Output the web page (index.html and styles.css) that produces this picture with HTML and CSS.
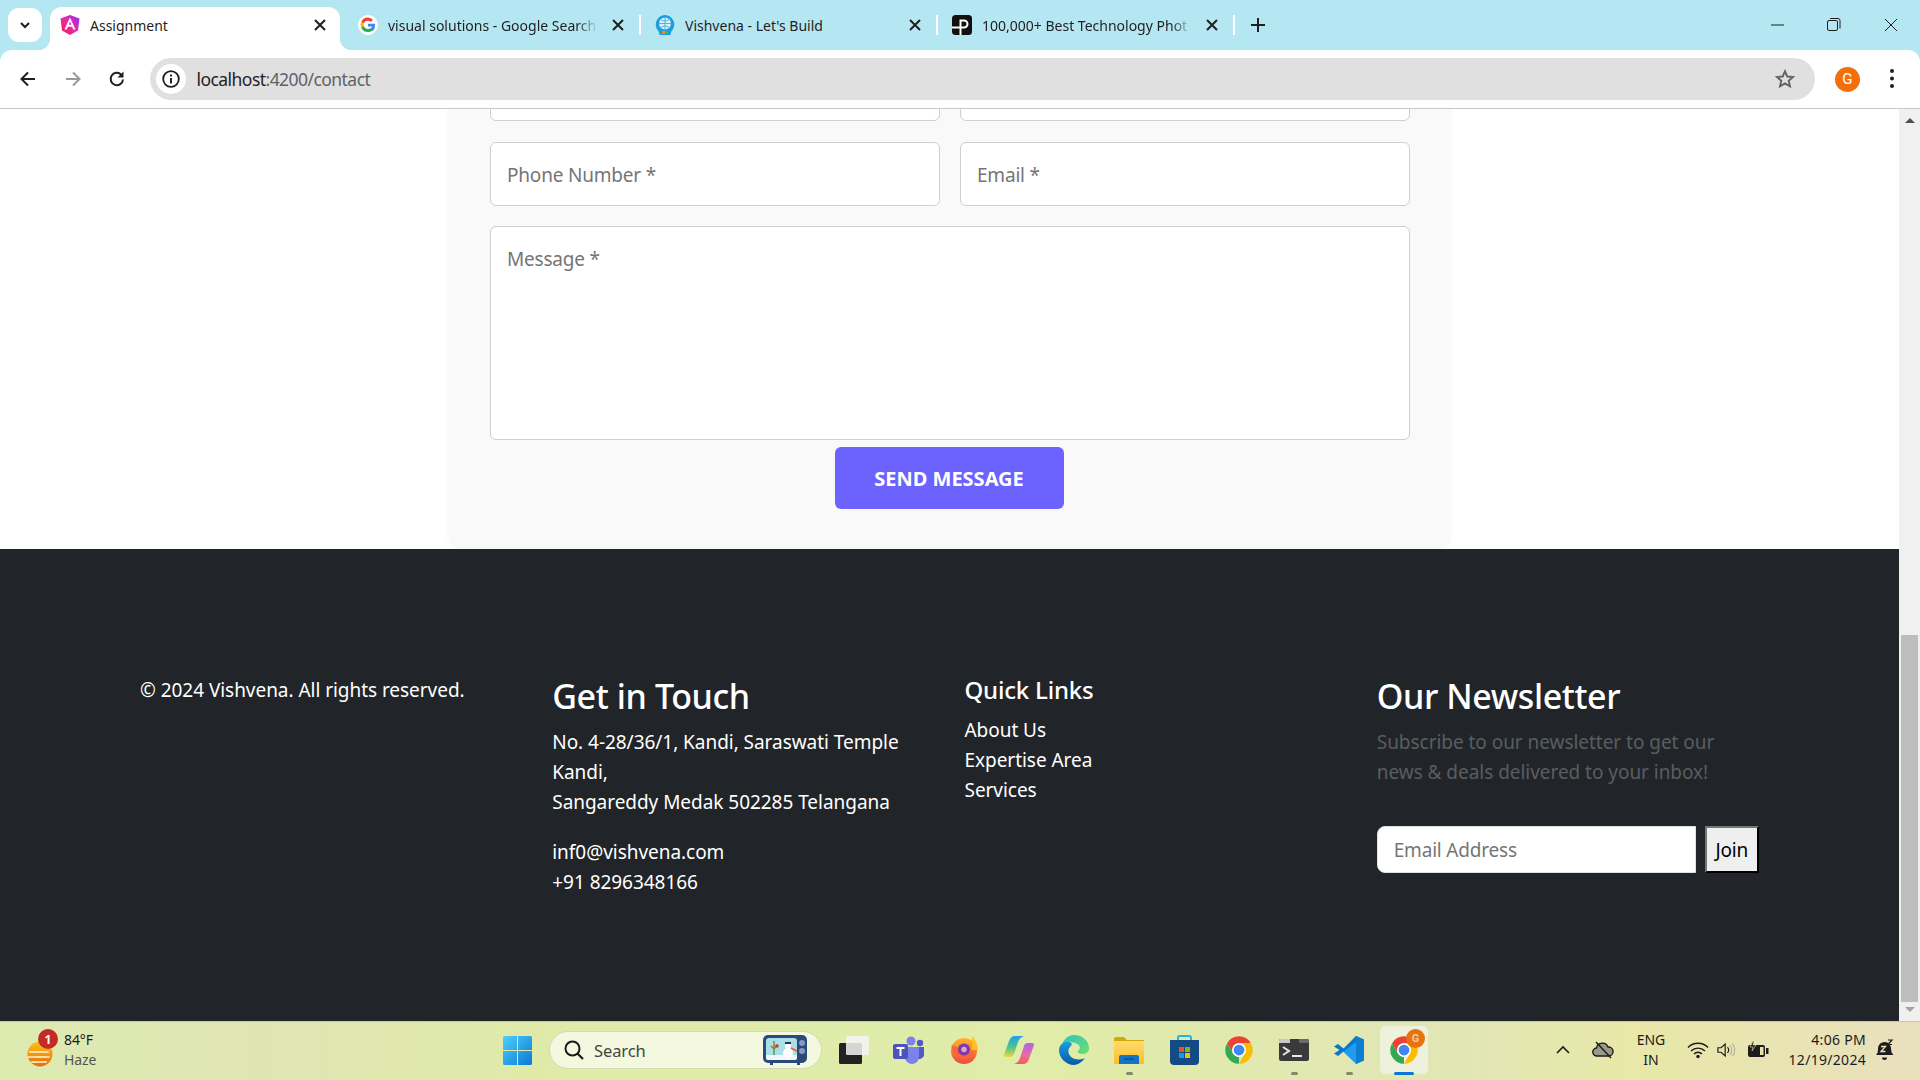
FILE: index.html
```html
<!DOCTYPE html>
<html lang="en">
<head>
  <meta charset="UTF-8" />
  <title>Assignment</title>
  <link rel="stylesheet" href="styles.css">
</head>
<body>

  <svg class="defs" width="0" height="0">
    <symbol id="chrome" viewBox="0 0 48 48">
      <path fill="#ea4335" d="M4.95 13A22 22 0 0 1 43.05 13H24a11 11 0 0 0-9.5 16.5z"/>
      <path fill="#fbbc04" d="M43.05 13A22 22 0 0 1 24 46l9.5-16.5A11 11 0 0 0 24 13z"/>
      <path fill="#34a853" d="M24 46A22 22 0 0 1 4.95 13l9.55 16.5a11 11 0 0 0 9.5 5.5z"/>
      <circle cx="24" cy="24" r="11" fill="#fff"/>
      <circle cx="24" cy="24" r="8.6" fill="#4285f4"/>
    </symbol>
    <symbol id="close" viewBox="0 0 20 20">
      <path d="M5 5l10 10M15 5L5 15" stroke="#1f1f1f" stroke-width="2" fill="none"/>
    </symbol>
    <linearGradient id="ngGrad" x1="0" y1="1" x2="1" y2="0">
      <stop offset="0" stop-color="#f5183f"/><stop offset=".5" stop-color="#e92aa8"/><stop offset="1" stop-color="#8f2cf2"/>
    </linearGradient>
    <linearGradient id="winGrad" x1="0" y1="0" x2="1" y2="1">
      <stop offset="0" stop-color="#4fd0fb"/><stop offset="1" stop-color="#0a78d4"/>
    </linearGradient>
    <linearGradient id="edgeGrad" x1="0" y1="0" x2="1" y2="1">
      <stop offset="0" stop-color="#2fc1c8"/><stop offset="1" stop-color="#6fe06a"/>
    </linearGradient>
    <linearGradient id="edgeBlue" x1="0" y1="0" x2="0" y2="1">
      <stop offset="0" stop-color="#1a9ce0"/><stop offset="1" stop-color="#0b5aa6"/>
    </linearGradient>
    <linearGradient id="copGrad" x1="0" y1="0" x2="0" y2="1">
      <stop offset="0" stop-color="#1f9cee"/><stop offset=".55" stop-color="#4cc98a"/><stop offset="1" stop-color="#f2d43c"/>
    </linearGradient>
    <linearGradient id="copGrad2" x1="0" y1="0" x2="0" y2="1">
      <stop offset="0" stop-color="#a866e8"/><stop offset=".6" stop-color="#ec6aa4"/><stop offset="1" stop-color="#f2604c"/>
    </linearGradient>
    <linearGradient id="folderGrad" x1="0" y1="0" x2="0" y2="1">
      <stop offset="0" stop-color="#ffdc6a"/><stop offset="1" stop-color="#fbbd2c"/>
    </linearGradient>
    <linearGradient id="sunGrad" x1="0" y1="0" x2="0" y2="1">
      <stop offset="0" stop-color="#fcc21a"/><stop offset="1" stop-color="#ec6a08"/>
    </linearGradient>
    <linearGradient id="foxGrad" x1="0" y1="0" x2="0" y2="1">
      <stop offset="0" stop-color="#ffb52e"/><stop offset="1" stop-color="#f0483e"/>
    </linearGradient>
  </svg>

  <div class="tabstrip">
    <button class="tab-menu">
      <svg width="14" height="14" viewBox="0 0 14 14"><path d="M3 5l4 4 4-4" stroke="#1f1f1f" stroke-width="2" fill="none"/></svg>
    </button>

    <div class="tab tab-active">
      <svg class="favicon" viewBox="0 0 20 20">
        <path fill="url(#ngGrad)" d="M10 0l9.500 3.400-1.500 12L10 20l-8-4.600-1.500-12z"/>
        <path fill="#fff" d="M10 2.500L4.500 14.500h2.300l1-2.700h4.400l1 2.700h2.300zM8.700 9.800L10 6.600l1.300 3.200z"/>
      </svg>
      <span class="tab-title">Assignment</span>
      <svg class="tab-x"><use href="#close"/></svg>
    </div>

    <div class="tab tab-second">
      <svg class="favicon" viewBox="0 0 20 20">
        <circle cx="10" cy="10" r="10" fill="#fff"/>
        <path fill="#4285f4" d="M17 10.200c0-.5 0-1-.1-1.500H10v2.900h4a3.400 3.400 0 0 1-1.500 2.200v1.900h2.400c1.400-1.300 2.100-3.200 2.100-5.500z"/>
        <path fill="#34a853" d="M10 17c2 0 3.600-.7 4.900-1.800l-2.400-1.900c-.7.400-1.500.7-2.500.7-1.900 0-3.500-1.300-4.100-3H3.400v1.900A7 7 0 0 0 10 17z"/>
        <path fill="#fbbc05" d="M5.900 11a4.200 4.200 0 0 1 0-2.700V6.400H3.400a7 7 0 0 0 0 6.500z"/>
        <path fill="#ea4335" d="M10 5.800c1.100 0 2 .4 2.800 1.100l2.100-2.100A7 7 0 0 0 3.400 6.400l2.500 1.900c.6-1.700 2.200-2.500 4.100-2.500z"/>
      </svg>
      <span class="tab-title tab-fade">visual solutions - Google Search</span>
      <svg class="tab-x"><use href="#close"/></svg>
    </div>

    <div class="tab">
      <svg class="favicon" viewBox="0 0 20 20">
        <path fill="#1b9be0" d="M10 0a9.500 9.500 0 0 1 7 15.500c-.8.900-1.200 2-1.500 4.500h-11c-.3-2.500-.7-3.600-1.500-4.500A9.500 9.500 0 0 1 10 0z"/>
        <circle cx="10" cy="8.500" r="6" fill="#d6f0fb"/>
        <path d="M10 2.500v12M4 8.500h12M6 4.500c2.500 2 5.500 2 8 0M6 12.500c2.500-2 5.500-2 8 0" stroke="#4aa9dc" stroke-width=".9" fill="none"/>
        <path fill="#f08a24" d="M7 16h3v3H7z"/>
        <path fill="#55b04a" d="M10 16h3v3h-3z"/>
      </svg>
      <span class="tab-title">Vishvena - Let's Build</span>
      <svg class="tab-x"><use href="#close"/></svg>
    </div>

    <div class="tab">
      <svg class="favicon" viewBox="0 0 20 20">
        <rect width="20" height="20" rx="3.500" fill="#111"/>
        <path d="M8.500 20V5.500h3.500a3.500 3.500 0 0 1 0 7H0" stroke="#fff" stroke-width="2" fill="none"/>
      </svg>
      <span class="tab-title tab-fade">100,000+ Best Technology Phot</span>
      <svg class="tab-x"><use href="#close"/></svg>
    </div>

    <svg class="tab-new" viewBox="0 0 20 20"><path d="M10 3v14M3 10h14" stroke="#1f1f1f" stroke-width="2"/></svg>

    <div class="win-controls">
      <div class="win-btn"><svg width="16" height="16" viewBox="0 0 16 16"><path d="M2 8h13" stroke="#1f1f1f" stroke-width="1"/></svg></div>
      <div class="win-btn"><svg width="16" height="16" viewBox="0 0 16 16"><rect x="1.500" y="3.500" width="10" height="10" rx="1.500" fill="none" stroke="#1f1f1f"/><path d="M4 1.500h8a2 2 0 0 1 2 2v8" fill="none" stroke="#1f1f1f"/></svg></div>
      <div class="win-btn"><svg width="16" height="16" viewBox="0 0 16 16"><path d="M2 2l12 12M14 2L2 14" stroke="#1f1f1f" stroke-width="1"/></svg></div>
    </div>
  </div>

  <div class="toolbar">
    <div class="nav-btn"><svg width="20" height="20" viewBox="0 0 20 20"><path d="M17 10H4M10 3.500L3.500 10l6.500 6.500" stroke="#1f1f1f" stroke-width="2" fill="none"/></svg></div>
    <div class="nav-btn"><svg width="20" height="20" viewBox="0 0 20 20"><path d="M3 10h13M10 3.500l6.500 6.500-6.500 6.500" stroke="#9a9a9a" stroke-width="2" fill="none"/></svg></div>
    <div class="nav-btn"><svg width="20" height="20" viewBox="0 0 20 20"><path d="M16 10.500A6.200 6.200 0 1 1 14.200 5.600" stroke="#1f1f1f" stroke-width="2" fill="none"/><path d="M16.500 2.500v6h-6z" fill="#1f1f1f"/></svg></div>
    <div class="omnibox">
      <div class="site-info">
        <svg width="20" height="20" viewBox="0 0 20 20"><circle cx="10" cy="10" r="7.800" stroke="#1f1f1f" stroke-width="1.800" fill="none"/><path d="M10 9v5.500M10 5.500v2" stroke="#1f1f1f" stroke-width="1.900"/></svg>
      </div>
      <span class="url">localhost<span class="url-dim">:4200/contact</span></span>
      <svg class="star" width="20" height="20" viewBox="0 0 20 20"><path d="M10 2.300l2.300 5.200 5.700.5-4.300 3.800 1.300 5.600-5-3-5 3 1.300-5.600L2 8l5.700-.5z" fill="none" stroke="#5f6368" stroke-width="1.900"/></svg>
    </div>
    <div class="nav-btn nav-avatar"><span class="avatar">G</span></div>
    <div class="nav-btn"><svg width="6" height="22" viewBox="0 0 6 22"><circle cx="3" cy="3" r="2" fill="#1f1f1f"/><circle cx="3" cy="10.500" r="2" fill="#1f1f1f"/><circle cx="3" cy="18" r="2" fill="#1f1f1f"/></svg></div>
  </div>

  <div class="viewport">
    <div class="page">
      <section class="contact">
        <form class="contact-card">
          <div class="form-row">
            <input class="field" type="text">
            <input class="field" type="text">
          </div>
          <div class="form-row">
            <input class="field" type="text" placeholder="Phone Number *">
            <input class="field" type="text" placeholder="Email *">
          </div>
          <textarea class="field field-msg" placeholder="Message *"></textarea>
          <button class="send-btn" type="button">SEND MESSAGE</button>
        </form>
      </section>

      <footer class="footer">
        <div class="foot-col">
          <p>© 2024 Vishvena. All rights reserved.</p>
        </div>
        <div class="foot-col">
          <h2>Get in Touch</h2>
          <p class="foot-gap">No. 4-28/36/1, Kandi, Saraswati Temple Kandi,<br>Sangareddy Medak 502285 Telangana</p>
          <p>inf0@vishvena.com<br>+91 8296348166</p>
        </div>
        <div class="foot-col">
          <h5>Quick Links</h5>
          <ul class="foot-links">
            <li>About Us</li>
            <li>Expertise Area</li>
            <li>Services</li>
          </ul>
        </div>
        <div class="foot-col">
          <h2>Our Newsletter</h2>
          <p class="news-text">Subscribe to our newsletter to get our news &amp; deals delivered to your inbox!</p>
          <div class="news-form">
            <input class="news-input" type="text" placeholder="Email Address">
            <button class="news-btn" type="button">Join</button>
          </div>
        </div>
      </footer>
    </div>

    <div class="scrollbar">
      <span class="arrow-up"></span>
      <span class="thumb"></span>
      <span class="arrow-down"></span>
    </div>
  </div>

  <div class="taskbar">
    <div class="weather">
      <div class="weather-icon">
        <svg width="30" height="30" viewBox="0 0 30 30">
          <circle cx="16" cy="15" r="12.500" fill="url(#sunGrad)"/>
          <path d="M6 13h18M1 18h24M8 23h14" stroke="#f3dfa8" stroke-width="2.200" stroke-linecap="round"/>
        </svg>
        <span class="weather-badge">1</span>
      </div>
      <div class="weather-text">
        <span>84°F</span>
        <span class="weather-sub">Haze</span>
      </div>
    </div>

    <svg class="win-logo" viewBox="0 0 29 29">
      <path fill="url(#winGrad)" d="M0 1.500A1.500 1.500 0 0 1 1.500 0H14v14H0zM15 0h12.500A1.500 1.500 0 0 1 29 1.500V14H15zM0 15h14v14H1.500A1.500 1.500 0 0 1 0 27.500zM15 15h14v12.500a1.500 1.500 0 0 1-1.500 1.500H15z"/>
    </svg>

    <div class="search-pill">
      <svg width="22" height="22" viewBox="0 0 22 22"><circle cx="9.500" cy="9.500" r="7" fill="none" stroke="#1c1c1c" stroke-width="2"/><path d="M14.500 14.500l5.500 5.500" stroke="#1c1c1c" stroke-width="2.200"/></svg>
      <span class="search-label">Search</span>
      <svg class="search-art" width="44" height="30" viewBox="0 0 44 30">
        <rect x="0" y="0" width="44" height="28" rx="5" fill="#2b4a7c"/>
        <rect x="3" y="3" width="31" height="22" rx="3" fill="#a9dfe6"/>
        <path d="M3 20h31v3a2 2 0 0 1-2 2H5a2 2 0 0 1-2-2z" fill="#eef7fa"/>
        <path d="M11 6v14M8 11l3 3 3-4" stroke="#7c8a4a" stroke-width="1.500" fill="none"/>
        <circle cx="14" cy="11" r="1.800" fill="#d9372c"/>
        <circle cx="25" cy="11" r="3" fill="#fff"/>
        <circle cx="25" cy="18" r="5" fill="#fff"/>
        <path d="M22 7h6v2h-6z" fill="#23365c"/>
        <path d="M28 13l6 3" stroke="#e8642c" stroke-width="1.800"/>
        <circle cx="39" cy="8" r="3" fill="#8a96c6"/>
        <circle cx="39" cy="16" r="3" fill="#8a96c6"/>
        <path d="M7 28h3v2H7zM34 28h3v2h-3z" fill="#2b4a7c"/>
      </svg>
    </div>

    <div class="task-icons">
      <div class="task-slot">
        <svg width="30" height="28" viewBox="0 0 30 28">
          <rect x="0" y="7" width="23" height="21" rx="1.500" fill="#222"/>
          <rect x="7" y="0" width="23" height="19" rx="1.500" fill="#f4f4f4" fill-opacity=".85"/>
        </svg>
      </div>
      <div class="task-slot">
        <svg width="32" height="28" viewBox="0 0 32 28">
          <circle cx="18" cy="5" r="4.500" fill="#7b83eb"/>
          <circle cx="27" cy="7" r="3.200" fill="#5059c9"/>
          <path d="M23 11h8v8a5 5 0 0 1-8 3z" fill="#5059c9"/>
          <path d="M10 11h16v10a7 7 0 0 1-14 0z" fill="#7b83eb"/>
          <rect x="0" y="8" width="15" height="15" rx="2" fill="#4b53bc"/>
          <path d="M3.500 11h8v2H8.500v7h-2v-7h-3z" fill="#fff"/>
        </svg>
      </div>
      <div class="task-slot">
        <svg width="28" height="28" viewBox="0 0 28 28">
          <circle cx="14" cy="15" r="13" fill="url(#foxGrad)"/>
          <path d="M22 0c4 5 6 9 6 14h-6z" fill="#ffbf24"/>
          <path d="M1.500 9c1 10 9 17 17 13.500 3-1.300 5-5 5-8.500-2 3-6 4-9 3-3-1-3-4-3-4z" fill="#f7653a"/>
          <circle cx="14" cy="13.500" r="6" fill="#7a3aa8"/>
          <circle cx="14" cy="13.500" r="2.700" fill="#e8a0d8"/>
        </svg>
      </div>
      <div class="task-slot">
        <svg width="30" height="28" viewBox="0 0 30 28">
          <path d="M11 0h9c-3 1-5 3-6 6l-4 12c-.6 2-2 3-4 3H2c-1.500 0-2.300-1.500-1.700-3L5 5c1-3 3-5 6-5z" fill="url(#copGrad)"/>
          <path d="M19 28h-9c3-1 5-3 6-6l4-12c.6-2 2-3 4-3h4c1.500 0 2.300 1.500 1.700 3L25 23c-1 3-3 5-6 5z" fill="url(#copGrad2)"/>
        </svg>
      </div>
      <div class="task-slot">
        <svg width="30" height="30" viewBox="0 0 30 30">
          <path d="M15 0c8.500 0 15 6 15 13 0 4-3 6-6.500 6-3 0-5-1-5-3 3-1 4-6-2-8C10 6 5 8 2 13 3 6 8 0 15 0z" fill="url(#edgeGrad)"/>
          <path d="M0 15c0-5 5-9 10-8 4 1 3 3 1 5-3 3-2 10 5 12 5 1 8 0 10-1-3 4-7 7-11 7C7 30 0 23 0 15z" fill="url(#edgeBlue)"/>
        </svg>
      </div>
      <div class="task-slot has-dot">
        <svg width="30" height="27" viewBox="0 0 30 27">
          <path d="M0 2a2 2 0 0 1 2-2h8l3 3h17v5H0z" fill="#dba30e"/>
          <rect x="0" y="4" width="30" height="23" rx="1" fill="url(#folderGrad)"/>
          <path d="M5 20a2 2 0 0 1 2-2h16a2 2 0 0 1 2 2v7H5z" fill="#1274c4"/>
          <path d="M10 22h10" stroke="#0c4f8a" stroke-width="1.500"/>
        </svg>
      </div>
      <div class="task-slot">
        <svg width="29" height="30" viewBox="0 0 29 30">
          <path d="M8 6V2.500a1.500 1.500 0 0 1 1.500-1.500h10A1.500 1.500 0 0 1 21 2.500V6" fill="none" stroke="#27b4e8" stroke-width="2"/>
          <path d="M0 5h29v21a4 4 0 0 1-4 4H4a4 4 0 0 1-4-4z" fill="#154b85"/>
          <rect x="9" y="12" width="5" height="5" fill="#f25022"/>
          <rect x="15" y="12" width="5" height="5" fill="#7fba00"/>
          <rect x="9" y="18" width="5" height="5" fill="#00a4ef"/>
          <rect x="15" y="18" width="5" height="5" fill="#ffb900"/>
        </svg>
      </div>
      <div class="task-slot">
        <svg width="30" height="30"><use href="#chrome"/></svg>
      </div>
      <div class="task-slot has-dot">
        <svg width="30" height="22" viewBox="0 0 30 22">
          <rect width="30" height="22" rx="2" fill="#3a3a3a"/>
          <path d="M2 0h9v4H0V2a2 2 0 0 1 2-2z" fill="#c8c8c8"/>
          <path d="M20 0h8a2 2 0 0 1 2 2v2H20z" fill="#6a6a6a"/>
          <path d="M4 8l6 4-6 4" stroke="#e8e8e8" stroke-width="2" fill="none"/>
          <path d="M13 17h10" stroke="#e8e8e8" stroke-width="2"/>
        </svg>
      </div>
      <div class="task-slot has-dot">
        <svg width="30" height="30" viewBox="0 0 30 30">
          <path d="M22 1l8 3.500v21L22 29 9 16.500z" fill="#1f9cf0"/>
          <path d="M22 1v28l8-3.500v-21z" fill="#0d7fd0"/>
          <path d="M22 7L9.500 16.500 4 21l-4-2.500L5.500 15 0 11.500 4 9l5.500 4.500L22 1z" fill="#0a78c8"/>
        </svg>
      </div>
      <div class="task-slot task-active">
        <svg width="30" height="30"><use href="#chrome"/></svg>
        <span class="chrome-badge">G</span>
      </div>
    </div>

    <div class="tray">
      <div class="tray-chevron"><svg width="16" height="10" viewBox="0 0 16 10"><path d="M2 8l6-6 6 6" stroke="#1c1c1c" stroke-width="1.600" fill="none"/></svg></div>
      <div class="tray-cloud"><svg width="22" height="18" viewBox="0 0 22 18"><path d="M5 15a4 4 0 0 1-.5-8A6 6 0 0 1 16 6a4.500 4.500 0 0 1 1 9z" fill="#9a9a8a" stroke="#1c1c1c" stroke-width="1.400"/><path d="M4 1l15 16" stroke="#1c1c1c" stroke-width="1.500"/></svg></div>
      <div class="tray-lang"><span>ENG</span><span>IN</span></div>
      <div class="tray-wifi"><svg width="22" height="18" viewBox="0 0 22 18"><path d="M1 6.500a14 14 0 0 1 20 0M4 10a10 10 0 0 1 14 0M7 13a5.500 5.500 0 0 1 8 0" fill="none" stroke="#1c1c1c" stroke-width="1.400"/><circle cx="11" cy="15.500" r="1.700" fill="#1c1c1c"/></svg></div>
      <div class="tray-sound"><svg width="22" height="18" viewBox="0 0 22 18"><path d="M1 6.500h3.500L9 2.500v13l-4.500-4H1z" fill="none" stroke="#1c1c1c" stroke-width="1.300"/><path d="M11.500 6a4 4 0 0 1 0 6" fill="none" stroke="#1c1c1c" stroke-width="1.300"/><path d="M14 3.500a8 8 0 0 1 0 11M17 2a11 11 0 0 1 0 14" fill="none" stroke="#b0b09a" stroke-width="1.200"/></svg></div>
      <div class="tray-battery"><svg width="22" height="18" viewBox="0 0 22 18"><rect x="1" y="4" width="17" height="12" rx="2" fill="#1c1c1c"/><rect x="13" y="6" width="3.500" height="8" fill="#e6e3ac"/><path d="M19 7h2.500v6H19z" fill="#1c1c1c"/><path d="M6 0L3 6h3l-1 4 4-6H6l1-4z" fill="#1c1c1c" stroke="#e6e3ac" stroke-width=".6"/></svg></div>
      <div class="tray-clock"><span>4:06 PM</span><span>12/19/2024</span></div>
      <div class="tray-bell"><svg width="20" height="22" viewBox="0 0 20 22"><path d="M1 16c2-2 2-4 2-7a6.500 6.500 0 0 1 7-6 6.500 6.500 0 0 1 6 6c0 3 .5 5 2.500 7z" fill="#1c1c1c"/><path d="M7 18.500h5a2.500 2.500 0 0 1-5 0z" fill="#1c1c1c"/><path d="M6 7.500h4.500L6 12.500h4.500" stroke="#e9e3b5" stroke-width="1.300" fill="none"/><path d="M13 1h4l-4 4.500h4" stroke="#1c1c1c" stroke-width="1.200" fill="none"/></svg></div>
    </div>
  </div>

</body>
</html>
```

FILE: styles.css
```css
* { box-sizing: border-box; }

html, body {
  margin: 0;
  padding: 0;
  height: 100%;
  overflow: hidden;
}

body {
  display: flex;
  flex-direction: column;
  width: 1920px;
  height: 1080px;
  background: #b5e7f3;
  color: #1f1f1f;
  font-family: "Noto Sans", "Open Sans", sans-serif;
}

.defs { position: absolute; }

/* tab strip */
.tabstrip {
  display: flex;
  align-items: center;
  height: 50px;
  padding-left: 8px;
  flex-shrink: 0;
}

.tab-menu {
  display: flex;
  align-items: center;
  justify-content: center;
  width: 34px;
  height: 34px;
  margin-right: 8px;
  border: none;
  border-radius: 11px;
  background: #fff;
  padding: 0;
}

.tab {
  display: flex;
  align-items: center;
  gap: 10px;
  width: 297px;
  height: 20px;
  padding: 0 11px 0 14px;
  border-right: 2px solid #fff;
  font-size: 14px;
}

.tab-second { margin-left: 4px; }

.tab-active {
  position: relative;
  align-self: flex-end;
  width: 290px;
  height: 43px;
  padding: 0 10px 7px;
  background: #fff;
  border: none;
  border-radius: 12px 12px 0 0;
}

.tab-active::before,
.tab-active::after {
  content: "";
  position: absolute;
  bottom: 0;
  width: 12px;
  height: 12px;
}

.tab-active::before {
  left: -12px;
  background: radial-gradient(circle at 0 0, transparent 12px, #fff 12.500px);
}

.tab-active::after {
  right: -12px;
  background: radial-gradient(circle at 100% 0, transparent 12px, #fff 12.500px);
}

.favicon {
  width: 20px;
  height: 20px;
  flex-shrink: 0;
}

.tab-title {
  flex: 1;
  overflow: hidden;
  white-space: nowrap;
}

.tab-fade {
  -webkit-mask-image: linear-gradient(to right, #000 90%, transparent);
  mask-image: linear-gradient(to right, #000 90%, transparent);
}

.tab-x {
  width: 20px;
  height: 20px;
  flex-shrink: 0;
}

.tab-new {
  width: 20px;
  height: 20px;
  margin-left: 13px;
}

.win-controls {
  display: flex;
  margin-left: auto;
  margin-right: 1px;
}

.win-btn {
  display: flex;
  align-items: center;
  justify-content: center;
  width: 57px;
  height: 50px;
}

/* toolbar */
.toolbar {
  position: relative;
  display: flex;
  align-items: center;
  height: 59px;
  padding: 0 6px;
  flex-shrink: 0;
  background: #fff;
  border-bottom: 1px solid #c8c8c8;
  border-radius: 12px 12px 0 0;
}

.nav-btn {
  display: flex;
  align-items: center;
  justify-content: center;
  width: 44.500px;
  height: 44px;
  flex-shrink: 0;
}

.nav-avatar { margin-left: 10px; }

.omnibox {
  display: flex;
  align-items: center;
  flex: 1;
  height: 42px;
  margin-left: 10px;
  padding: 0 20px 0 6px;
  background: #e0e0e0;
  border-radius: 21px;
}

.site-info {
  display: flex;
  align-items: center;
  justify-content: center;
  width: 30px;
  height: 30px;
  margin-right: 11px;
  background: #fff;
  border-radius: 50%;
}

.url {
  flex: 1;
  font-size: 17.500px;
  letter-spacing: -0.55px;
}

.url-dim { color: #5f6368; }

.avatar {
  display: flex;
  align-items: center;
  justify-content: center;
  width: 25px;
  height: 25px;
  border-radius: 50%;
  background: #f26f0c;
  color: #fff;
  font-family: "Roboto", sans-serif;
  font-size: 15px;
}

/* page area */
.viewport {
  display: flex;
  flex: 1;
  min-height: 0;
  background: #fff;
}

.page {
  display: flex;
  flex-direction: column;
  flex: 1;
  min-width: 0;
}

.contact {
  display: flex;
  justify-content: center;
  height: 440px;
  overflow: hidden;
  flex-shrink: 0;
}

.contact-card {
  display: flex;
  flex-direction: column;
  justify-content: flex-end;
  align-items: center;
  width: 1001px;
  height: 100%;
  padding: 0 40px 40px 41px;
  background: #f9f9f9;
  border-radius: 0 0 12px 12px;
  box-shadow: 0 0 6px rgba(0, 0, 0, 0.04);
}

.form-row {
  display: flex;
  justify-content: space-between;
  width: 100%;
  margin-bottom: 20.500px;
  flex-shrink: 0;
}

.field {
  width: 450px;
  height: 64px;
  padding: 2px 16px 0;
  background: #fff;
  border: 1px solid #cfcfcf;
  border-radius: 6px;
  font-family: inherit;
  font-size: 19px;
  letter-spacing: -0.2px;
  outline: none;
  flex-shrink: 0;
}

.field::placeholder,
.news-input::placeholder {
  color: #757575;
}

.field-msg {
  display: block;
  width: 100%;
  height: 214px;
  padding: 19px 16px 16px;
  margin-bottom: 7px;
  resize: none;
}

.send-btn {
  width: 229px;
  height: 62px;
  margin-right: 2px;
  padding: 1px 0 0;
  border: none;
  border-radius: 6px;
  background: #6c63ff;
  color: #fff;
  font-family: inherit;
  font-size: 20px;
  font-weight: 700;
  letter-spacing: 0;
  flex-shrink: 0;
}

/* footer */
.footer {
  display: grid;
  grid-template-columns: repeat(4, 1fr);
  flex: 1;
  padding: 126px 110px 0 140px;
  background: #212529;
  color: #fff;
  font-size: 19px;
  letter-spacing: -0.04px;
  line-height: 30px;
}

.foot-col p {
  margin: 0;
}

.foot-col h2 {
  margin: 0 0 10px;
  font-size: 34px;
  font-weight: 500;
  line-height: 42px;
  letter-spacing: -0.4px;
}

.foot-col h5 {
  margin: 0 0 10px;
  font-size: 24px;
  font-weight: 500;
  line-height: 30px;
  letter-spacing: -0.2px;
}

.foot-col .foot-gap {
  width: 350px;
  margin-bottom: 20px;
}

.foot-links {
  margin: 0;
  padding: 0;
  list-style: none;
}

.foot-col .news-text {
  width: 340px;
  margin-bottom: 39px;
  color: #5a5d60;
}

.news-form {
  display: flex;
  gap: 9px;
}

.news-input {
  width: 319px;
  height: 47px;
  padding: 0 16px;
  background: #fff;
  border: 1px solid #dee2e6;
  border-radius: 8px 0 0 8px;
  font-family: inherit;
  font-size: 19px;
  letter-spacing: -0.2px;
  outline: none;
}

.news-btn {
  width: 54px;
  height: 47px;
  padding: 0;
  background: #efefef;
  border: 2px outset #000;
  border-color: #767676 #000 #000 #767676;
  color: #000;
  font-family: inherit;
  font-size: 19px;
  letter-spacing: -0.2px;
}

/* scrollbar */
.scrollbar {
  display: flex;
  flex-direction: column;
  align-items: center;
  width: 21px;
  padding: 9px 0 9px;
  background: #f0f0f0;
  flex-shrink: 0;
}

.arrow-up {
  width: 0;
  height: 0;
  border: 5px solid transparent;
  border-top: none;
  border-bottom: 5px solid #505050;
}

.arrow-down {
  width: 0;
  height: 0;
  border: 5px solid transparent;
  border-bottom: none;
  border-top: 5px solid #a3a3a3;
}

.thumb {
  width: 17px;
  height: 367px;
  margin-top: auto;
  margin-bottom: 5px;
  background: #bdbdbd;
}

/* taskbar */
.taskbar {
  display: flex;
  align-items: center;
  height: 59px;
  padding-bottom: 2px;
  flex-shrink: 0;
  border-top: 1px solid #c6c9a2;
  background: linear-gradient(to right, #dcebb0 0%, #e0e5b2 15%, #dfeba8 30%, #e0eca8 55%, #e2e6b6 76%, #e8e8a8 85%, #e9e0bd 100%);
  color: #1c1c1c;
}

.weather {
  display: flex;
  align-items: center;
  width: 503px;
  padding-left: 24px;
}

.weather-icon {
  position: relative;
  width: 30px;
  height: 30px;
  margin-top: 8px;
  margin-right: 10px;
}

.weather-badge {
  position: absolute;
  top: -10px;
  right: -4px;
  display: flex;
  align-items: center;
  justify-content: center;
  width: 20px;
  height: 20px;
  border-radius: 50%;
  background: #c42b26;
  color: #fff;
  font-size: 12px;
  font-weight: 700;
}

.weather-text {
  display: flex;
  flex-direction: column;
  font-size: 14px;
  line-height: 20px;
  letter-spacing: -0.1px;
}

.weather-sub { color: #555; }

.win-logo {
  width: 29px;
  height: 29px;
  margin-right: 17px;
  flex-shrink: 0;
}

.search-pill {
  display: flex;
  align-items: center;
  width: 273px;
  height: 38px;
  margin-right: 4.500px;
  padding: 0 14px 0 13px;
  background: #f3f8df;
  border: 1px solid #d2dcae;
  border-radius: 19px;
  flex-shrink: 0;
}

.search-label {
  flex: 1;
  margin-left: 9px;
  color: #444;
  font-size: 16.500px;
  letter-spacing: -0.1px;
}

.task-icons {
  display: flex;
  align-items: center;
}

.task-slot {
  position: relative;
  display: flex;
  align-items: center;
  justify-content: center;
  width: 55px;
  height: 48px;
}

.has-dot::after {
  content: "";
  position: absolute;
  bottom: -1px;
  left: 24px;
  width: 7px;
  height: 3px;
  border-radius: 2px;
  background: #7f8a6a;
}

.task-active {
  width: 48px;
  margin-left: 3.500px;
  background: #eef2dc;
  border-radius: 5px;
}

.task-active::after {
  content: "";
  position: absolute;
  bottom: -1px;
  left: 14px;
  width: 20px;
  height: 3px;
  border-radius: 2px;
  background: #0a78d4;
}

.chrome-badge {
  position: absolute;
  top: 3px;
  right: 3px;
  display: flex;
  align-items: center;
  justify-content: center;
  width: 19px;
  height: 19px;
  border-radius: 50%;
  background: #e8720c;
  color: #f8c9a0;
  font-family: "Roboto", sans-serif;
  font-size: 11px;
  font-weight: 700;
}

.tray {
  display: flex;
  align-items: center;
  margin-left: auto;
  padding-right: 25px;
  font-size: 14px;
  line-height: 20px;
}

.tray > div {
  display: flex;
  align-items: center;
  justify-content: center;
}

.tray-chevron, .tray-cloud { width: 40px; }
.tray-wifi { width: 38px; }
.tray-sound { width: 20px; }
.tray-battery { width: 42px; }

.tray .tray-lang {
  flex-direction: column;
  width: 56px;
}

.tray .tray-clock {
  flex-direction: column;
  align-items: flex-end;
  width: 87px;
  margin-right: 9px;
  letter-spacing: 0.3px;
  white-space: nowrap;
}

.tray-bell { width: 20px; }
```
